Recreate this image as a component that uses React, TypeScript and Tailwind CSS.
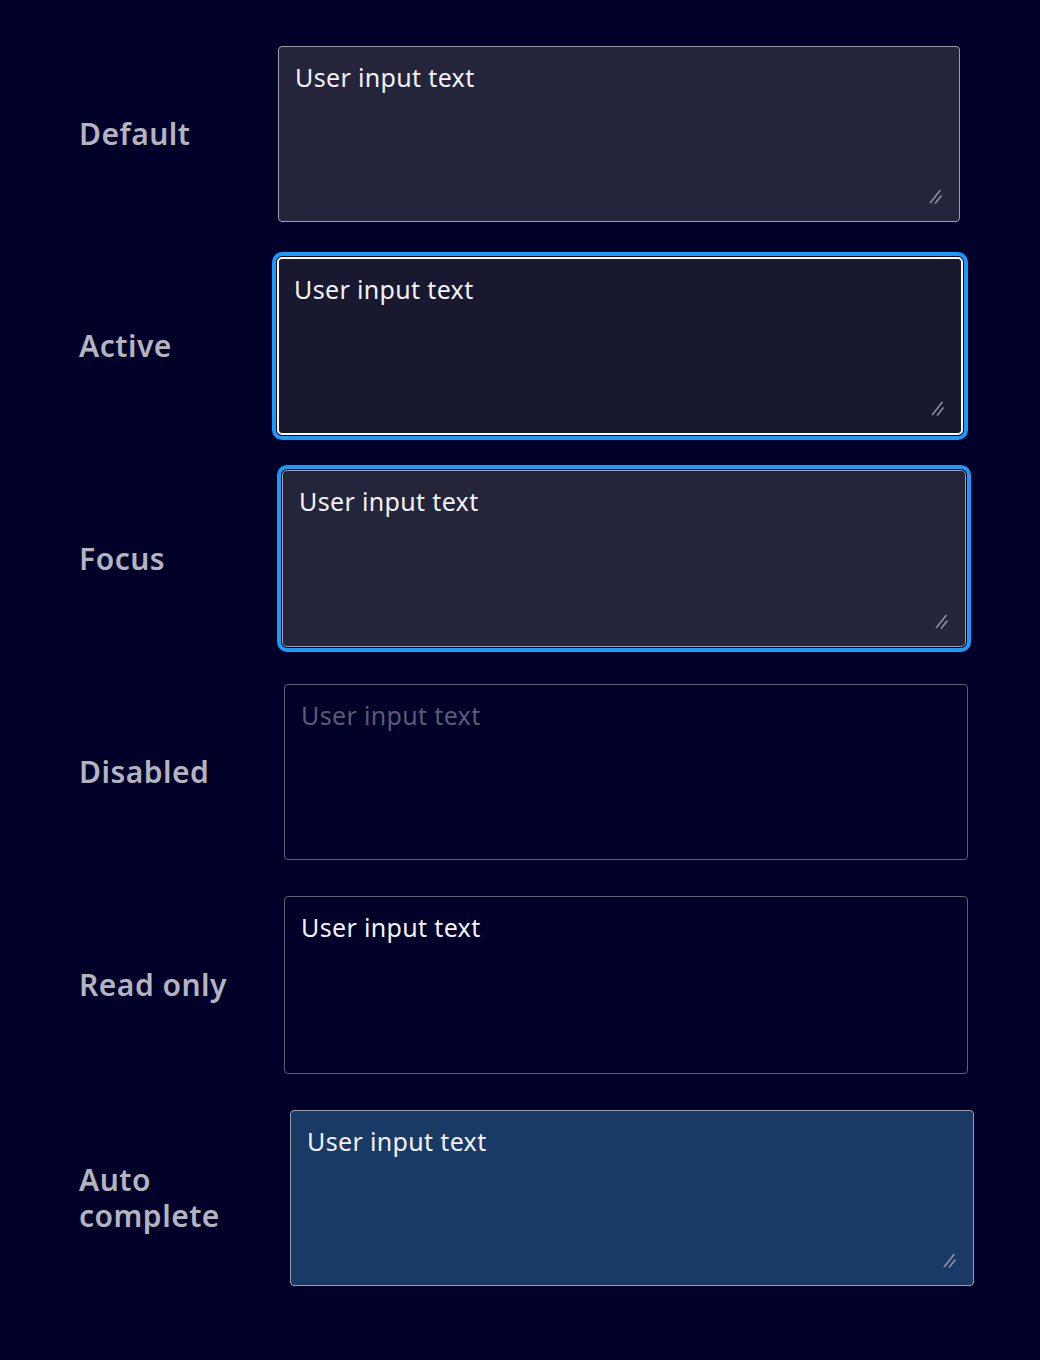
import type { ReactNode } from 'react'

type FieldProps = {
  label: string
  className: string
  wrapClassName: string
  padClassName?: string
  disabled?: boolean
  handle?: boolean
}

function ResizeHandle() {
  return (
    <svg
      className="pointer-events-none absolute bottom-[17px] right-[17px]"
      width="13"
      height="15"
      viewBox="0 0 13 15"
      fill="none"
    >
      <path d="M1.5 13.5 L11 1.5" stroke="#8f8fa3" strokeWidth="1.6" strokeLinecap="round" />
      <path d="M6.5 14 L12 7" stroke="#8f8fa3" strokeWidth="1.6" strokeLinecap="round" />
    </svg>
  )
}

function Row({ label, className, wrapClassName, padClassName = 'pl-4', disabled, handle = true }: FieldProps) {
  return (
    <div className={`flex items-center ${wrapClassName}`}>
      <div className="w-[190px] shrink-0 text-[30px] font-semibold leading-[36px] tracking-[0.5px] text-[#b4b4c1]">
        {label}
      </div>
      <Box className={className} padClassName={padClassName} disabled={disabled} handle={handle} />
    </div>
  )
}

function Box({
  className,
  padClassName,
  disabled,
  handle,
}: {
  className: string
  padClassName: string
  disabled?: boolean
  handle: boolean
}): ReactNode {
  return (
    <div className={`relative shrink-0 ${className}`}>
      <textarea
        readOnly
        disabled={disabled}
        defaultValue="User input text"
        className={`block h-full w-full resize-none overflow-hidden bg-transparent pr-4 pt-[14px] text-[25px] leading-[32px] tracking-[0.35px] outline-none ${padClassName}`}
        style={{ color: 'inherit' }}
      />
      {handle && <ResizeHandle />}
    </div>
  )
}

export default function App() {
  return (
    <div
      className="min-h-[1360px] bg-[#000028] pl-[79px] pt-[46px]"
      style={{ fontFamily: '"Noto Sans", "Open Sans", sans-serif' }}
    >
      <Row
        label="Default"
        wrapClassName=""
        className="ml-[9px] h-[176px] w-[682px] rounded-[4px] border border-[#9d9daf] bg-[#24243a] text-[#f2f2f6]"
      />
      <Row
        label="Active"
        wrapClassName="mt-[35px]"
        padClassName="pl-[15px]"
        className="ml-[8px] h-[178px] w-[686px] rounded-[5px] border-2 border-white bg-[#18182f] text-[#f2f2f6] outline-[4px] outline-offset-1 outline-[#1a9bfb] outline-solid"
      />
      <Row
        label="Focus"
        wrapClassName="mt-[35px]"
        className="ml-[13px] h-[177px] w-[684px] rounded-[5px] border border-[#9d9daf] bg-[#24243a] text-[#f2f2f6] outline-[4px] outline-offset-1 outline-[#1a9bfb] outline-solid"
      />
      <Row
        label="Disabled"
        wrapClassName="mt-[37px]"
        disabled
        handle={false}
        className="ml-[15px] h-[176px] w-[684px] rounded-[4px] border border-[#5f5f77] text-[#5b5b77]"
      />
      <Row
        label="Read only"
        wrapClassName="mt-[36px]"
        handle={false}
        className="ml-[15px] h-[178px] w-[684px] rounded-[4px] border border-[#5f5f77] text-[#f2f2f6]"
      />
      <Row
        label="Auto complete"
        wrapClassName="mt-[36px]"
        className="ml-[21px] h-[176px] w-[684px] rounded-[4px] border border-[#9d9daf] bg-[#1a3a66] text-[#f2f2f6]"
      />
    </div>
  )
}
